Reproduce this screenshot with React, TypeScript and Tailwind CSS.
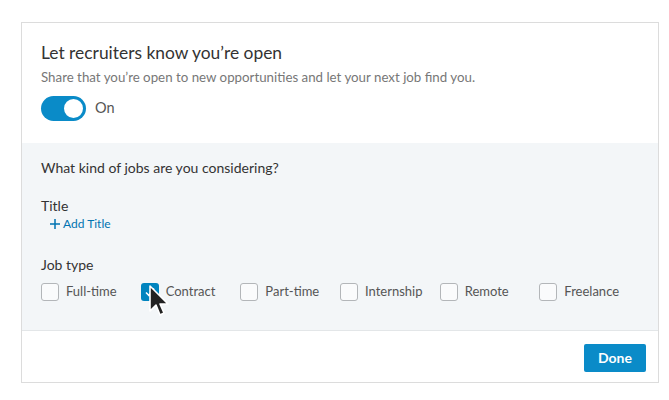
import React from "react";

const jobTypes = [
  { label: "Full-time", checked: false },
  { label: "Contract", checked: true },
  { label: "Part-time", checked: false },
  { label: "Internship", checked: false },
  { label: "Remote", checked: false },
  { label: "Freelance", checked: false },
];

function Checkbox({ checked }: { checked: boolean }) {
  if (checked) {
    return (
      <span className="w-[18px] h-[18px] rounded-[3px] bg-[#0084bf] flex items-center justify-center">
        <svg width="12" height="12" viewBox="0 0 12 12">
          <path d="M2 6.5 L5 9.5 L10 2.5" fill="none" stroke="#fff" strokeWidth="1.6" />
        </svg>
      </span>
    );
  }
  return <span className="w-[18px] h-[18px] rounded-[3px] border border-[#b3b6b9] bg-[#fafbfc]" />;
}

export default function App() {
  return (
    <div className="w-[669px] h-[400px] bg-white pt-[22px] pl-[21px] font-['Lato','Liberation_Sans',sans-serif]">
      <div className="w-[638px] border border-[#dcdcdc] bg-white">
        {/* header */}
        <div className="px-[19px] pt-[18px] pb-[22px]">
          <h2 className="text-[17.4px] leading-[24px] text-[#333]">Let recruiters know you’re open</h2>
          <p className="mt-[4px] text-[13.3px] leading-[16px] text-[#777]">
            Share that you’re open to new opportunities and let your next job find you.
          </p>
          <div className="mt-[11px] flex items-center gap-[9px]">
            <span className="w-[45px] h-[25px] rounded-full bg-[#0a8bc8] flex items-center justify-end pr-[1px]">
              <span className="w-[23px] h-[23px] rounded-full bg-white border-2 border-[#0a8bc8]" />
            </span>
            <span className="text-[14.5px] leading-[20px] text-[#555] -mt-[2px]">On</span>
          </div>
        </div>

        {/* gray body */}
        <div className="bg-[#f3f6f8] border-b border-[#e3e6e8] px-[19px] pt-[15px] pb-[28px]">
          <p className="text-[14px] leading-[20px] text-[#333]">What kind of jobs are you considering?</p>
          <p className="mt-[18px] text-[14px] leading-[20px] text-[#333]">Title</p>
          <button className="ml-[9px] flex items-center gap-[3px] text-[12px] leading-[16px] text-[#0073b1]">
            <svg width="10" height="10" viewBox="0 0 10 10">
              <path d="M5 0v10M0 5h10" stroke="#0073b1" strokeWidth="1.5" />
            </svg>
            Add Title
          </button>
          <p className="mt-[23px] text-[14px] leading-[20px] text-[#333]">Job type</p>
          <div className="mt-[7px] flex">
            {jobTypes.map((j) => (
              <label key={j.label} className="relative w-[100px] flex items-center gap-[7px]">
                <Checkbox checked={j.checked} />
                <span className="text-[13px] text-[#555]">{j.label}</span>
                {j.checked && (
                  <svg className="absolute left-[7px] top-[2px]" width="22" height="36" viewBox="0 0 22 36">
                    <path d="M2 2 L2 27 L8 21 L12 31 L16 29 L12 20 L20 20 Z" fill="#222" stroke="#fff" strokeWidth="1.6" strokeLinejoin="round" />
                  </svg>
                )}
              </label>
            ))}
          </div>
        </div>

        {/* footer */}
        <div className="flex justify-end px-[12px] pt-[13px] pb-[10px]">
          <button className="w-[62px] h-[28px] rounded-[2px] bg-[#0a8bc8] text-white text-[14px] font-bold">Done</button>
        </div>
      </div>
    </div>
  );
}
